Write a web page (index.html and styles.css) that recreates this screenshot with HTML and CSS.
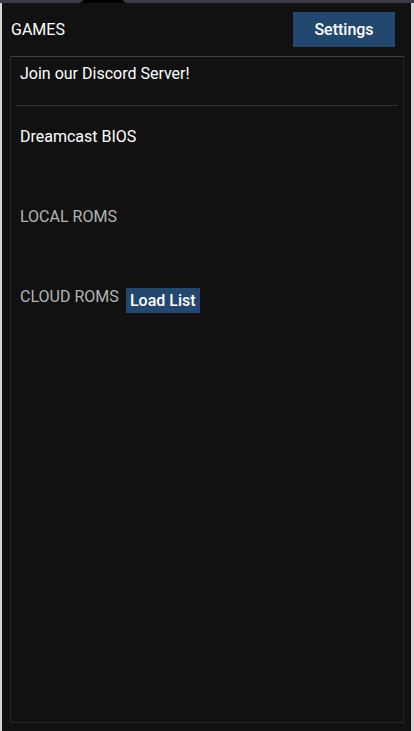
FILE: index.html
```html
<!DOCTYPE html>
<html lang="en">
<head>
    <meta charset="UTF-8">
    <meta name="viewport" content="width=device-width, initial-scale=1.0">
    <title>Games</title>
    <link rel="stylesheet" href="styles.css">
</head>
<body>
    <div class="topbar">
        <div class="notch"></div>
    </div>
    <div class="panel">
        <header class="header">
            <h1 class="title">GAMES</h1>
            <button class="btn settings">Settings</button>
        </header>
        <main class="list">
            <div class="row discord">Join our Discord Server!</div>
            <hr class="sep">
            <div class="row bios">Dreamcast BIOS</div>
            <div class="row section">LOCAL ROMS</div>
            <div class="row section cloud">
                <span>CLOUD ROMS</span>
                <button class="btn load">Load List</button>
            </div>
        </main>
    </div>
</body>
</html>
```

FILE: styles.css
```css
* {
    padding: 0;
    margin: 0;
    box-sizing: border-box;
}

body {
    background-color: #d4d4d6;
    font-family: Roboto, "Noto Sans", sans-serif;
    height: 731px;
    overflow: hidden;
}

.topbar {
    height: 3px;
    background-color: #3b3c43;
    position: relative;
}

.notch {
    position: absolute;
    left: 80px;
    top: 0;
    width: 46px;
    height: 3px;
    background-color: #000;
    clip-path: polygon(0 100%, 8% 0, 92% 0, 100% 100%);
}

.panel {
    margin-left: 2px;
    width: 409px;
    height: 728px;
    background-color: #111111;
    display: flex;
    flex-direction: column;
}

.header {
    height: 53px;
    display: flex;
    align-items: center;
    justify-content: space-between;
    padding: 0 16px 0 9px;
}

.title {
    font-size: 16px;
    font-weight: 400;
    color: #ffffff;
}

.btn {
    font-family: Roboto, "Noto Sans", sans-serif;
    background-color: #22486f;
    color: #ffffff;
    border: none;
    font-weight: 500;
}

.settings {
    width: 102px;
    height: 35px;
    font-size: 16px;
}

.list {
    flex: 1;
    margin: 0 7px 8px 8px;
    border: 1px solid #262626;
    border-top-color: #3e3e3e;
    padding: 0 1px;
}

.row {
    font-size: 16px;
    line-height: 18px;
    color: #ffffff;
    padding-left: 8px;
}

.discord {
    padding-top: 8px;
    height: 48px;
}

.sep {
    border: none;
    border-top: 1px solid #333333;
    margin: 0 4px;
}

.bios {
    margin-top: 22px;
}

.section {
    margin-top: 62px;
    color: #b4b4b4;
}

.cloud {
    display: flex;
    align-items: flex-start;
}

.load {
    margin-left: 7px;
    width: 74px;
    height: 25px;
    font-size: 16px;
}
```
